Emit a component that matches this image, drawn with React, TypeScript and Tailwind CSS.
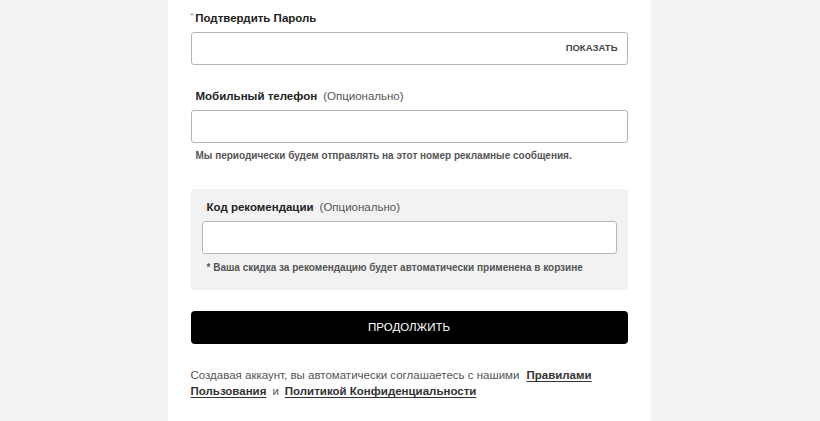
import React from "react";

const inputStyle =
  "w-full h-[33px] border border-[#b5b5b5] rounded-[3px] bg-white";

const linkStyle = "font-bold text-[#333] underline underline-offset-2";

export default function App() {
  return (
    <div className="w-full h-[421px] overflow-hidden bg-[#f3f3f3] flex justify-center font-['Liberation_Sans',Arial,sans-serif]">
      <div className="w-[483px] bg-white px-[23px] pt-[11px] -translate-x-[1px]">
        {/* Confirm password */}
        <label className="flex items-start text-[11.5px] font-bold text-[#222] leading-[14px]">
          <span className="text-[7px] text-[#777] font-normal leading-[9px] mr-[2px]">*</span>
          Подтвердить Пароль
        </label>
        <div className={`${inputStyle} mt-[7px] flex items-center justify-end pr-[9px]`}>
          <span className="text-[9.5px] font-bold text-[#444]">ПОКАЗАТЬ</span>
        </div>

        {/* Mobile phone */}
        <div className="mt-[23px] pl-[5px] leading-[14px]">
          <span className="text-[11.5px] font-bold text-[#222]">Мобильный телефон</span>
          <span className="text-[11.5px] text-[#555] ml-[6px]">(Опционально)</span>
        </div>
        <div className={`${inputStyle} mt-[7px]`} />
        <p className="mt-[6px] pl-[5px] text-[10px] font-bold text-[#555] leading-[13px]">
          Мы периодически будем отправлять на этот номер рекламные сообщения.
        </p>

        {/* Referral code */}
        <div className="mt-[27px] bg-[#f2f2f2] rounded-[2px] px-[11px] pt-[10px] pb-[16px]">
          <div className="pl-[5px] leading-[14px]">
            <span className="text-[11.5px] font-bold text-[#222]">Код рекомендации</span>
            <span className="text-[11.5px] text-[#555] ml-[6px]">(Опционально)</span>
          </div>
          <div className={`${inputStyle} mt-[7px]`} />
          <p className="mt-[7px] pl-[5px] text-[10px] font-bold text-[#555] leading-[13px]">
            * Ваша скидка за рекомендацию будет автоматически применена в корзине
          </p>
        </div>

        <button
          type="button"
          className="mt-[21px] w-full h-[33px] bg-black rounded-[4px] text-white text-[11.5px]"
        >
          ПРОДОЛЖИТЬ
        </button>

        {/* Terms */}
        <div className="mt-[23px] text-[11.5px] leading-[16px] text-[#555]">
          <div className="flex gap-[7px]">
            <span>Создавая аккаунт, вы автоматически соглашаетесь с нашими</span>
            <a className={linkStyle}>Правилами</a>
          </div>
          <div className="flex gap-[6px]">
            <a className={linkStyle}>Пользования</a>
            <span>и</span>
            <a className={linkStyle}>Политикой Конфиденциальности</a>
          </div>
        </div>
      </div>
    </div>
  );
}
